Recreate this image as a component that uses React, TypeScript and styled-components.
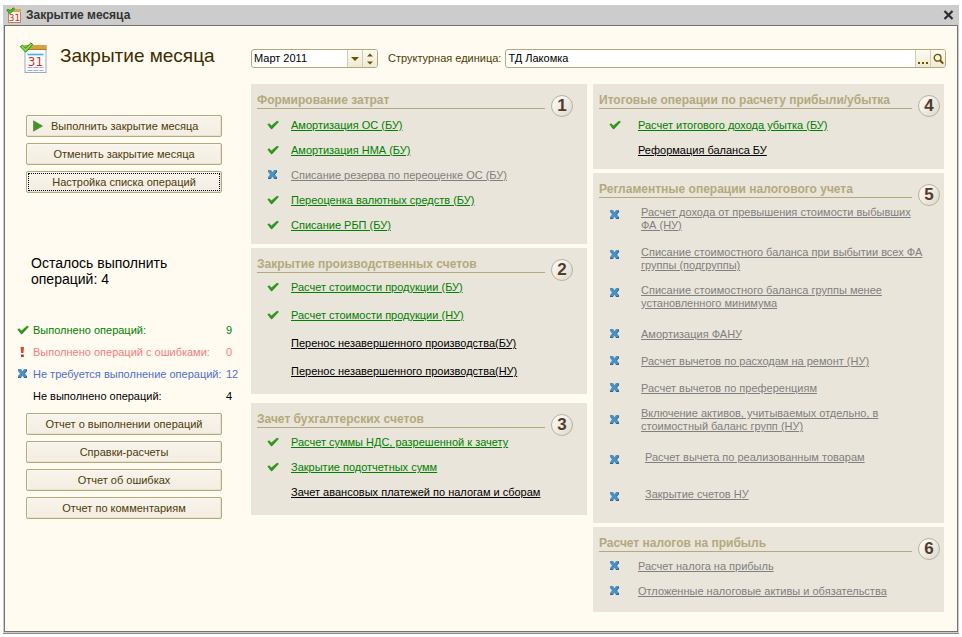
import React from "react";
import styled, { createGlobalStyle, css } from "styled-components";

const color = {
  page: "#fffbf0",
  panel: "#eae5da",
  khaki: "#b4a97d",
  brown: "#4d3b0a",
  green: "#008000",
  grey: "#808080",
  black: "#000000",
  red: "#f47c7c",
  blue: "#4f6fc8",
};

const GlobalStyle = createGlobalStyle`
  *, *::before, *::after { box-sizing: border-box; }
  body {
    margin: 0;
    background: #ffffff;
    font-family: "Liberation Sans", Arial, sans-serif;
    font-size: 11px;
    line-height: 13px;
    color: #000000;
  }
  button, input { font: inherit; color: inherit; }
`;

/* ---------- window ---------- */

const Window = styled.div`
  display: flex;
  flex-direction: column;
  margin: 5px 3px 3px;
  min-height: calc(100vh - 8px);
  background: #cccccc;
  border-bottom: 1px solid #8c8c8c;
  padding: 0 1px 1px;
`;

const TitleBar = styled.header`
  display: flex;
  align-items: center;
  gap: 4px;
  height: 20px;
  padding: 0 4px 0 2px;
`;

const WindowTitle = styled.span`
  flex: 1;
  font-weight: bold;
  font-size: 12px;
  color: #333333;
`;

const CloseButton = styled.button`
  display: flex;
  padding: 0;
  border: 0;
  background: none;
`;

const Body = styled.main`
  flex: 1;
  display: grid;
  grid-template-columns: 246px minmax(0, 1fr);
  border: 1px solid #737373;
  background: ${color.page};
`;

/* ---------- sidebar ---------- */

const Sidebar = styled.aside`
  display: flex;
  flex-direction: column;
  padding: 16px 0 12px 12px;
`;

const PageHeading = styled.div`
  display: flex;
  gap: 12px;
  padding-left: 2px;
`;

const PageTitle = styled.h1`
  margin: 0;
  padding-top: 3px;
  font-size: 19px;
  line-height: 22px;
  font-weight: normal;
  color: #3d2c00;
`;

const ButtonStack = styled.div<{ $top: number }>`
  display: flex;
  flex-direction: column;
  gap: 6px;
  width: 196px;
  margin: ${(p) => p.$top}px 0 0 9px;
`;

const PushButton = styled.button<{ $focused?: boolean; $withIcon?: boolean }>`
  display: flex;
  align-items: center;
  justify-content: ${(p) => (p.$withIcon ? "flex-start" : "center")};
  gap: 8px;
  height: 22px;
  padding: 0 6px;
  border: 1px solid ${color.khaki};
  border-radius: 2px;
  background: linear-gradient(#f9f4ec, #f3ede2);
  box-shadow: inset -1px -1px 0 #e9e1d2, inset 1px 1px 0 #fbf8f2;
  color: ${color.brown};
  ${(p) =>
    p.$focused &&
    css`
      outline: 1px dotted #000000;
      outline-offset: -3px;
    `}
`;

const Remaining = styled.p`
  margin: 62px 0 0 14px;
  max-width: 160px;
  font-size: 14px;
  line-height: 16px;
`;

const Stats = styled.dl`
  margin: 32px 0 0;
`;

const StatRow = styled.div<{ $color: string }>`
  display: grid;
  grid-template-columns: 12px 189px 1fr;
  column-gap: 4px;
  align-items: center;
  height: 22px;
  color: ${(p) => p.$color};
`;

const StatName = styled.dt`
  grid-column: 2;
  white-space: nowrap;
`;

const StatValue = styled.dd`
  margin: 0;
`;

/* ---------- filter fields ---------- */

const Content = styled.div`
  display: flex;
  flex-direction: column;
  padding: 23px 13px 12px 0;
`;

const Fields = styled.div`
  display: flex;
  align-items: center;
  margin: 0 -2px 16px 0;
`;

const FieldBox = styled.div<{ $grow?: boolean }>`
  display: flex;
  height: 19px;
  overflow: hidden;
  border: 1px solid ${color.khaki};
  border-radius: 3px;
  background: #ffffff;
  ${(p) => (p.$grow ? "flex: 1; min-width: 0;" : "width: 127px;")}
`;

const FieldInput = styled.input`
  flex: 1;
  min-width: 0;
  padding: 0 2px;
  border: 0;
  outline: 0;
  background: transparent;
`;

const FieldButton = styled.button`
  display: flex;
  align-items: center;
  justify-content: center;
  width: 15px;
  padding: 0;
  border: 0;
  border-left: 1px solid #d3ccb0;
  background: linear-gradient(#fdfbf0, #efead2);
`;

const FieldLabel = styled.label`
  margin: 0 4px 0 10px;
  color: ${color.brown};
`;

/* ---------- operation cards ---------- */

const Cards = styled.div`
  display: grid;
  grid-template-columns: minmax(0, 336fr) minmax(0, 351fr);
  column-gap: 6px;
  align-items: start;
`;

const CardColumn = styled.div`
  display: flex;
  flex-direction: column;
  gap: 4px;
`;

const Card = styled.section<{ $bottom: number; $after?: number }>`
  background: ${color.panel};
  padding-bottom: ${(p) => p.$bottom}px;
  margin-bottom: ${(p) => p.$after ?? 0}px;
`;

const CardHeader = styled.header<{ $edge: number }>`
  display: flex;
  align-items: flex-start;
  gap: 6px;
  padding: 0 ${(p) => p.$edge}px 0 6px;
`;

const CardTitle = styled.h2`
  flex: 1;
  margin: 0;
  padding-top: 8px;
  border-bottom: 1px solid ${color.khaki};
  font-size: 12px;
  line-height: 16px;
  font-weight: bold;
  white-space: nowrap;
  color: ${color.khaki};
`;

const Badge = styled.span`
  display: flex;
  align-items: center;
  justify-content: center;
  width: 22px;
  height: 22px;
  margin-top: 11px;
  border: 1px solid #b9b39c;
  border-radius: 50%;
  background: linear-gradient(135deg, #ffffff, #ddd8c8);
  font-size: 17px;
  line-height: 20px;
  font-weight: bold;
  color: #523b2b;
`;

const OperationList = styled.ul<{ $lead: number }>`
  margin: 0;
  padding: ${(p) => p.$lead}px 0 0;
  list-style: none;
`;

const Operation = styled.li<{ $gap: number; $center?: boolean }>`
  display: grid;
  grid-template-columns: 24px minmax(0, 1fr);
  align-items: ${(p) => (p.$center ? "center" : "start")};
  padding-left: 16px;
  margin-bottom: ${(p) => p.$gap}px;
  &:last-child { margin-bottom: 0; }
`;

const IconSlot = styled.span<{ $drop?: boolean }>`
  display: flex;
  height: 12px;
  margin-top: ${(p) => (p.$drop ? 3 : 0)}px;
`;

const OperationLink = styled.a<{ $color: string; $indent: number }>`
  grid-column: 2;
  justify-self: start;
  margin-left: ${(p) => p.$indent}px;
  color: ${(p) => p.$color};
  text-decoration: underline;
  text-underline-offset: 1px;
  white-space: pre-line;
`;

/* ---------- icons ---------- */

const Check = () => (
  <svg width="12" height="12" viewBox="0 0 12 12" aria-hidden="true">
    <path d="M0.3 5.6 2.2 4.2 4.4 6.5 10 1.7 11.7 2.6 4.7 10.2Z" fill="#2f9e1c" />
    <path d="M2.2 7.5 4.6 9.9 11.5 2.8" fill="none" stroke="#1f7411" strokeWidth="0.8" />
  </svg>
);

const Cross = () => (
  <svg width="12" height="12" viewBox="0 0 12 12" aria-hidden="true">
    <path
      d="M1 1H4L5.5 3.2 7 1H10V3L8 5.5 10 8V10H7L5.5 7.8 4 10H1V8L3 5.5 1 3Z"
      fill="#4a90c2"
    />
    <path d="M1 9.5H4M7 9.5H10M9.5 8V10M9.5 2V3L7.5 5.5" fill="none" stroke="#2f658f" />
  </svg>
);

const Exclamation = () => (
  <svg width="12" height="12" viewBox="0 0 12 12" aria-hidden="true">
    <path d="M3.5 1H7L6.4 7H4.2Z" fill="#dc4434" />
    <rect x="4" y="8.4" width="2.8" height="2.6" rx="0.6" fill="#b52f24" />
  </svg>
);

const Play = () => (
  <svg width="10" height="12" viewBox="0 0 10 12" aria-hidden="true">
    <path d="M0.5 0.8 9.5 6 0.5 11.2Z" fill="#3a9a1c" stroke="#6d8160" strokeWidth="0.8" />
  </svg>
);

const Calendar = () => (
  <svg width="29" height="32" viewBox="0 0 28 32" aria-hidden="true">
    <rect x="5.5" y="3.5" width="21" height="27" fill="#f9fbfe" stroke="#9aa9bd" />
    <rect x="5" y="3" width="22" height="5" fill="#d9a23c" />
    <path d="M5 7.5H27" stroke="#a87a2a" />
    <path d="M8 12.5H24" stroke="#37b6ea" strokeWidth="1.6" />
    <path d="M8 25.5H24M8 28.5H24" stroke="#a9a7d6" strokeWidth="1.2" strokeDasharray="5 1" />
    <text x="16" y="23.5" textAnchor="middle" fontSize="12" fontFamily="DejaVu Sans" fill="#d3301c">
      31
    </text>
    <path d="M0.8 4.6 3 3 6 6.2 11.3 1 13.3 2.4 6.2 10.2Z" fill="#7be04c" stroke="#238a1b" />
  </svg>
);

const SmallCalendar = () => (
  <svg width="16" height="17" viewBox="0 0 16 17" aria-hidden="true">
    <rect x="2.5" y="2.5" width="12" height="13" fill="#fdf6ef" stroke="#b98b62" />
    <rect x="3" y="2" width="12" height="3" fill="#d9a850" />
    <text x="8.5" y="14" textAnchor="middle" fontSize="9" fontFamily="DejaVu Sans" fill="#d3301c">
      31
    </text>
    <path d="M0.8 3.2 2 2.2 4 4.2 7.4 0.8 8.6 1.8 4 6.8Z" fill="#5fc93a" stroke="#238a1b" />
  </svg>
);

const Close = () => (
  <svg width="11" height="10" viewBox="0 0 11 10" aria-hidden="true">
    <path d="M1.5 1 9.5 9M9.5 1 1.5 9" stroke="#2b2b33" strokeWidth="2.2" />
  </svg>
);

const ArrowDown = () => (
  <svg width="8" height="4" viewBox="0 0 8 4" aria-hidden="true">
    <path d="M0 0H8L4 4Z" fill="#6b5200" />
  </svg>
);

const Spinner = () => (
  <svg width="6" height="12" viewBox="0 0 6 12" aria-hidden="true">
    <path d="M0 3.5H6L3 0.5ZM0 8.5H6L3 11.5Z" fill="#6b5200" />
  </svg>
);

const Dots = () => (
  <svg width="11" height="12" viewBox="0 0 11 12" aria-hidden="true">
    <path d="M0 9H2V11H0ZM4 9H6V11H4ZM8 9H10V11H8Z" fill="#6b5200" />
  </svg>
);

const Magnifier = () => (
  <svg width="11" height="12" viewBox="0 0 11 12" aria-hidden="true">
    <circle cx="4.6" cy="4.8" r="3.4" fill="none" stroke="#6b5200" strokeWidth="1.3" />
    <path d="M7 7.3 10.2 10.6" stroke="#6b5200" strokeWidth="2" />
  </svg>
);

/* ---------- data ---------- */

type Status = "done" | "skipped" | "pending";

interface OperationItem {
  text: string;
  status: Status;
  gap?: number;
  indent?: number;
  drop?: boolean;
  center?: boolean;
}

interface CardData {
  number: number;
  title: string;
  lead: number;
  bottom: number;
  after?: number;
  gap: number;
  indent: number;
  items: OperationItem[];
}

const statusColor: Record<Status, string> = {
  done: color.green,
  skipped: color.grey,
  pending: color.black,
};

const middleCards: CardData[] = [
  {
    number: 1,
    title: "Формирование затрат",
    lead: 2,
    bottom: 12,
    gap: 12,
    indent: 0,
    items: [
      { text: "Амортизация ОС (БУ)", status: "done" },
      { text: "Амортизация НМА (БУ)", status: "done" },
      { text: "Списание резерва по переоценке ОС (БУ)", status: "skipped" },
      { text: "Переоценка валютных средств (БУ)", status: "done" },
      { text: "Списание РБП (БУ)", status: "done" },
    ],
  },
  {
    number: 2,
    title: "Закрытие производственных счетов",
    lead: 0,
    bottom: 16,
    after: 5,
    gap: 15,
    indent: 0,
    items: [
      { text: "Расчет стоимости продукции (БУ)", status: "done" },
      { text: "Расчет стоимости продукции (НУ)", status: "done" },
      { text: "Перенос незавершенного производства(БУ)", status: "pending" },
      { text: "Перенос незавершенного производства(НУ)", status: "pending" },
    ],
  },
  {
    number: 3,
    title: "Зачет бухгалтерских счетов",
    lead: 0,
    bottom: 16,
    gap: 12,
    indent: 0,
    items: [
      { text: "Расчет суммы НДС, разрешенной к зачету", status: "done" },
      { text: "Закрытие подотчетных сумм", status: "done" },
      { text: "Зачет авансовых платежей по налогам и сборам", status: "pending" },
    ],
  },
];

const rightCards: CardData[] = [
  {
    number: 4,
    title: "Итоговые операции по расчету прибыли/убытка",
    lead: 2,
    bottom: 12,
    gap: 12,
    indent: 5,
    items: [
      { text: "Расчет итогового дохода убытка (БУ)", status: "done" },
      { text: "Реформация баланса БУ", status: "pending" },
    ],
  },
  {
    number: 5,
    title: "Регламентные операции налогового учета",
    lead: 0,
    bottom: 20,
    gap: 14,
    indent: 8,
    items: [
      { text: "Расчет дохода от превышения стоимости выбывших\nФА (НУ)", status: "skipped", drop: true },
      {
        text: "Списание стоимостного баланса при выбытии всех ФА\nгруппы (подгруппы)",
        status: "skipped",
        gap: 12,
        drop: true,
      },
      {
        text: "Списание стоимостного баланса группы менее\nустановленного минимума",
        status: "skipped",
        gap: 18,
        drop: true,
      },
      { text: "Амортизация ФАНУ", status: "skipped" },
      { text: "Расчет вычетов по расходам на ремонт (НУ)", status: "skipped" },
      { text: "Расчет вычетов по преференциям", status: "skipped", gap: 12 },
      {
        text: "Включение активов, учитываемых отдельно, в\nстоимостный баланс групп (НУ)",
        status: "skipped",
        gap: 18,
        center: true,
      },
      {
        text: "Расчет вычета по реализованным товарам",
        status: "skipped",
        gap: 22,
        indent: 12,
        drop: true,
      },
      { text: "Закрытие счетов НУ", status: "skipped", indent: 12, drop: true },
    ],
  },
  {
    number: 6,
    title: "Расчет налогов на прибыль",
    lead: 0,
    bottom: 14,
    gap: 12,
    indent: 5,
    items: [
      { text: "Расчет налога на прибыль", status: "skipped" },
      { text: "Отложенные налоговые активы и обязательства", status: "skipped" },
    ],
  },
];

const stats = [
  { name: "Выполнено операций:", value: 9, color: color.green, icon: <Check /> },
  { name: "Выполнено операций с ошибками:", value: 0, color: color.red, icon: <Exclamation /> },
  { name: "Не требуется выполнение операций:", value: 12, color: color.blue, icon: <Cross /> },
  { name: "Не выполнено операций:", value: 4, color: color.black, icon: null },
];

const reports = [
  "Отчет о выполнении операций",
  "Справки-расчеты",
  "Отчет об ошибках",
  "Отчет по комментариям",
];

const OperationCard = ({ card, edge }: { card: CardData; edge: number }) => (
  <Card $bottom={card.bottom} $after={card.after}>
    <CardHeader $edge={edge}>
      <CardTitle>{card.title}</CardTitle>
      <Badge>{card.number}</Badge>
    </CardHeader>
    <OperationList $lead={card.lead}>
      {card.items.map((item) => (
        <Operation key={item.text} $gap={item.gap ?? card.gap} $center={item.center}>
          {item.status !== "pending" && (
            <IconSlot $drop={item.drop}>{item.status === "done" ? <Check /> : <Cross />}</IconSlot>
          )}
          <OperationLink
            href="#"
            $color={statusColor[item.status]}
            $indent={item.indent ?? card.indent}
          >
            {item.text}
          </OperationLink>
        </Operation>
      ))}
    </OperationList>
  </Card>
);

export default function App() {
  return (
    <>
      <GlobalStyle />
      <Window>
        <TitleBar>
          <SmallCalendar />
          <WindowTitle>Закрытие месяца</WindowTitle>
          <CloseButton aria-label="Закрыть">
            <Close />
          </CloseButton>
        </TitleBar>
        <Body>
          <Sidebar>
            <PageHeading>
              <Calendar />
              <PageTitle>Закрытие месяца</PageTitle>
            </PageHeading>
            <ButtonStack $top={41}>
              <PushButton $withIcon>
                <Play />
                Выполнить закрытие месяца
              </PushButton>
              <PushButton>Отменить закрытие месяца</PushButton>
              <PushButton $focused>Настройка списка операций</PushButton>
            </ButtonStack>
            <Remaining>Осталось выполнить операций: 4</Remaining>
            <Stats>
              {stats.map((stat) => (
                <StatRow key={stat.name} $color={stat.color}>
                  {stat.icon}
                  <StatName>{stat.name}</StatName>
                  <StatValue>{stat.value}</StatValue>
                </StatRow>
              ))}
            </Stats>
            <ButtonStack $top={6}>
              {reports.map((report) => (
                <PushButton key={report}>{report}</PushButton>
              ))}
            </ButtonStack>
          </Sidebar>
          <Content>
            <Fields>
              <FieldBox>
                <FieldInput aria-label="Период" defaultValue="Март 2011" />
                <FieldButton aria-label="Выбрать месяц">
                  <ArrowDown />
                </FieldButton>
                <FieldButton aria-label="Изменить месяц">
                  <Spinner />
                </FieldButton>
              </FieldBox>
              <FieldLabel htmlFor="unit">Структурная единица:</FieldLabel>
              <FieldBox $grow>
                <FieldInput id="unit" defaultValue="ТД Лакомка" />
                <FieldButton aria-label="Выбрать">
                  <Dots />
                </FieldButton>
                <FieldButton aria-label="Открыть">
                  <Magnifier />
                </FieldButton>
              </FieldBox>
            </Fields>
            <Cards>
              <CardColumn>
                {middleCards.map((card) => (
                  <OperationCard key={card.number} card={card} edge={14} />
                ))}
              </CardColumn>
              <CardColumn>
                {rightCards.map((card) => (
                  <OperationCard key={card.number} card={card} edge={4} />
                ))}
              </CardColumn>
            </Cards>
          </Content>
        </Body>
      </Window>
    </>
  );
}
